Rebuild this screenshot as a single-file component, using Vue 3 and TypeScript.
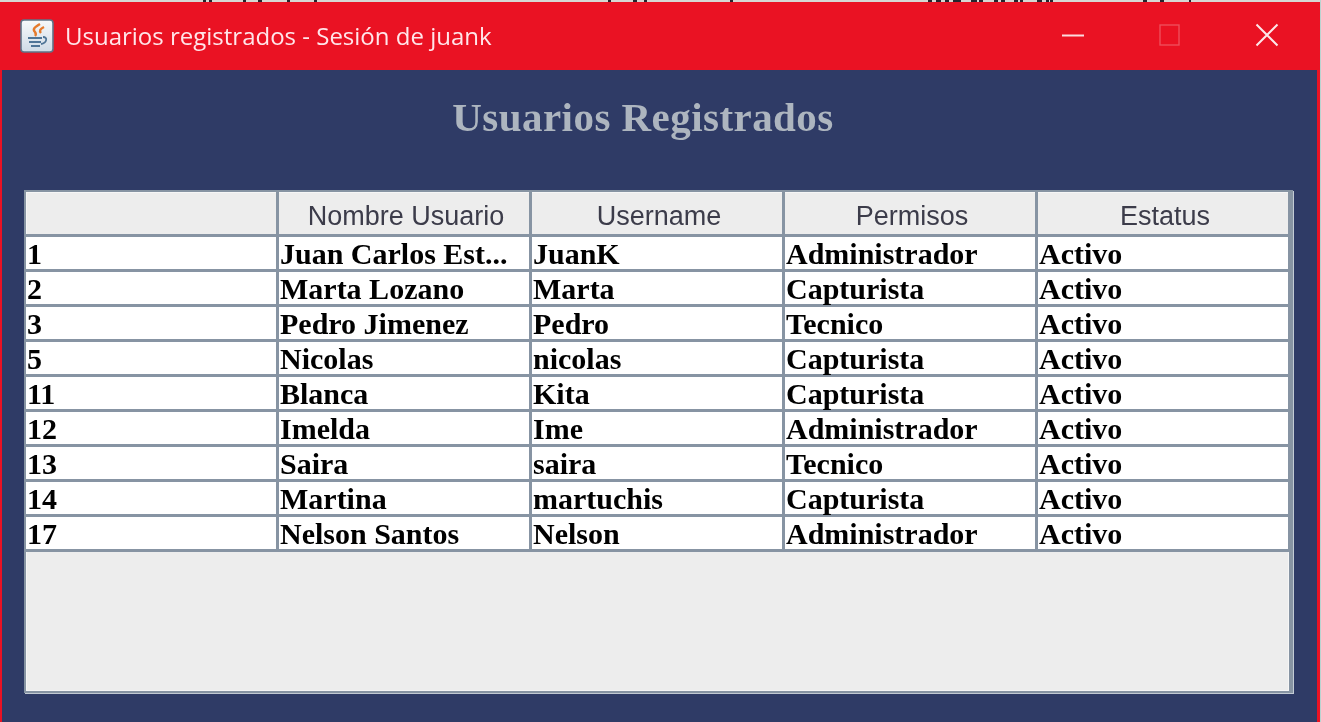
<script setup lang="ts">
interface Row { id: string; name: string; user: string; role: string; status: string }
const headers = ['', 'Nombre Usuario', 'Username', 'Permisos', 'Estatus']
const rows: Row[] = [
  { id: '1', name: 'Juan Carlos Est...', user: 'JuanK', role: 'Administrador', status: 'Activo' },
  { id: '2', name: 'Marta Lozano', user: 'Marta', role: 'Capturista', status: 'Activo' },
  { id: '3', name: 'Pedro Jimenez', user: 'Pedro', role: 'Tecnico', status: 'Activo' },
  { id: '5', name: 'Nicolas', user: 'nicolas', role: 'Capturista', status: 'Activo' },
  { id: '11', name: 'Blanca', user: 'Kita', role: 'Capturista', status: 'Activo' },
  { id: '12', name: 'Imelda', user: 'Ime', role: 'Administrador', status: 'Activo' },
  { id: '13', name: 'Saira', user: 'saira', role: 'Tecnico', status: 'Activo' },
  { id: '14', name: 'Martina', user: 'martuchis', role: 'Capturista', status: 'Activo' },
  { id: '17', name: 'Nelson Santos', user: 'Nelson', role: 'Administrador', status: 'Activo' },
]
// Fragments of the window behind, peeking out above the title bar: [x, width]
const peeks: [number, number][] = [
  [203, 3], [209, 3], [243, 3], [258, 4], [287, 3], [314, 3], [608, 3], [633, 4], [644, 3], [730, 3],
  [928, 4], [936, 5], [945, 4], [953, 8], [971, 6], [979, 4], [994, 4], [1001, 4], [1014, 4], [1020, 3],
  [1037, 5], [1046, 3], [1050, 3], [1143, 4], [1160, 4], [1189, 2],
]
</script>

<template>
  <div class="window">
    <div class="behind">
      <i v-for="p in peeks" :key="p[0]" class="peek" :style="{ left: p[0] + 'px', width: p[1] + 'px' }"></i>
    </div>
    <header class="titlebar">
      <svg class="app-icon" viewBox="0 0 34 34" aria-hidden="true">
        <defs>
          <linearGradient id="iconBg" x1="0" y1="0" x2="0" y2="1">
            <stop offset="0" stop-color="#f7f9fb" />
            <stop offset="1" stop-color="#cfdbe6" />
          </linearGradient>
        </defs>
        <rect x="1" y="1" width="32" height="32" rx="3" fill="url(#iconBg)" stroke="#5f7488" stroke-width="1.6" />
        <path d="M20 5c-5 3-8 5-5 8 1 1.500 1 3 0 4M24 8c-4 2-5 4-3 6" fill="none" stroke="#e57a2c" stroke-width="2.400" />
        <path d="M8 19h14M9 23h12M11 27h9" stroke="#4f7597" stroke-width="2.200" fill="none" />
        <path d="M23 18c5 0 4 6-2 7" stroke="#4f7597" stroke-width="1.800" fill="none" />
      </svg>
      <span class="title">Usuarios registrados - Sesión de juank</span>
      <div class="controls">
        <svg class="ctl ctl-min" viewBox="0 0 24 24" aria-hidden="true"><path d="M1 12.500h22" stroke="#fff" stroke-width="2" opacity=".85" /></svg>
        <svg class="ctl" viewBox="0 0 24 24" aria-hidden="true"><rect x="3" y="2" width="19" height="20" fill="none" stroke="#fff" stroke-width="1.400" opacity=".25" /></svg>
        <svg class="ctl" viewBox="0 0 24 24" aria-hidden="true"><path d="M1.500 1.500l21 21M22.500 1.500l-21 21" stroke="#fff" stroke-width="2" opacity=".9" /></svg>
      </div>
    </header>
    <main class="content">
      <h1 class="heading">Usuarios Registrados</h1>
      <section class="pane">
        <div class="head-row">
          <div v-for="(h, i) in headers" :key="i" class="head-cell">{{ h }}</div>
        </div>
        <div v-for="r in rows" :key="r.id" class="row">
          <div class="cell">{{ r.id }}</div>
          <div class="cell">{{ r.name }}</div>
          <div class="cell">{{ r.user }}</div>
          <div class="cell">{{ r.role }}</div>
          <div class="cell">{{ r.status }}</div>
        </div>
      </section>
    </main>
  </div>
</template>

<style>
html, body { margin: 0; background: #2f3b66; overflow: hidden; }
</style>

<style scoped>
.window {
  position: relative;
  width: 1321px;
  height: 722px;
  box-sizing: border-box;
  padding: 2px 3px 0 2px;
  background: #ea1223;
  border-right: 1px solid #b9d3d0;
  display: flex;
  flex-direction: column;
  filter: blur(0.55px);
}
.behind {
  position: absolute;
  left: 0;
  top: 0;
  width: 100%;
  height: 2px;
  background: #d6d8d4;
}
.peek {
  position: absolute;
  top: 0;
  height: 2px;
  background: #23252e;
}
.titlebar {
  height: 68px;
  flex: none;
  display: flex;
  align-items: center;
  padding-left: 18px;
  background: #ea1223;
  color: #fff;
}
.app-icon { width: 34px; height: 34px; flex: none; }
.title {
  margin-left: 11px;
  font: 400 24px/1 "Open Sans", "Noto Sans", sans-serif;
  color: #ffe6ea;
}
.controls {
  margin-left: auto;
  display: flex;
  gap: 74px;
  padding-right: 38px;
}
.ctl { width: 24px; height: 24px; display: block; margin-top: -2px; }
.ctl-min { margin-right: -2px; }
.content {
  flex: 1;
  background: #2f3b66;
  display: flex;
  flex-direction: column;
  padding: 0 24px 29px 22px;
}
.heading {
  margin: 27px 0 0;
  padding-right: 31px;
  height: 93px;
  text-align: center;
  font: 700 41px/40px "Liberation Serif", serif;
  letter-spacing: 0.45px;
  color: #adb5bf;
}
.pane {
  flex: 1;
  background: #ededed;
  border: 2px solid #8794a3;
  border-right-width: 4px;
  box-shadow: inset 0 0 0 1px #f6f6f6, 1px 1px 0 #c3cbd4;
}
.head-row, .row {
  display: grid;
  grid-template-columns: repeat(5, 253px);
  width: 1265px;
}
.head-row { height: 42px; border-bottom: 3px solid #8794a3; }
.head-cell {
  box-sizing: border-box;
  border-right: 3px solid #8794a3;
  padding: 6px 0 0 4px;
  display: flex;
  align-items: center;
  justify-content: center;
  font: 400 27px/1 "Liberation Sans", sans-serif;
  color: #3c3c4a;
}
.row { height: 32px; background: #fff; border-bottom: 3px solid #8794a3; }
.cell {
  border-right: 3px solid #8794a3;
  padding-left: 1px;
  font: 700 30px/33px "Liberation Serif", serif;
  color: #000;
  white-space: nowrap;
}
</style>
